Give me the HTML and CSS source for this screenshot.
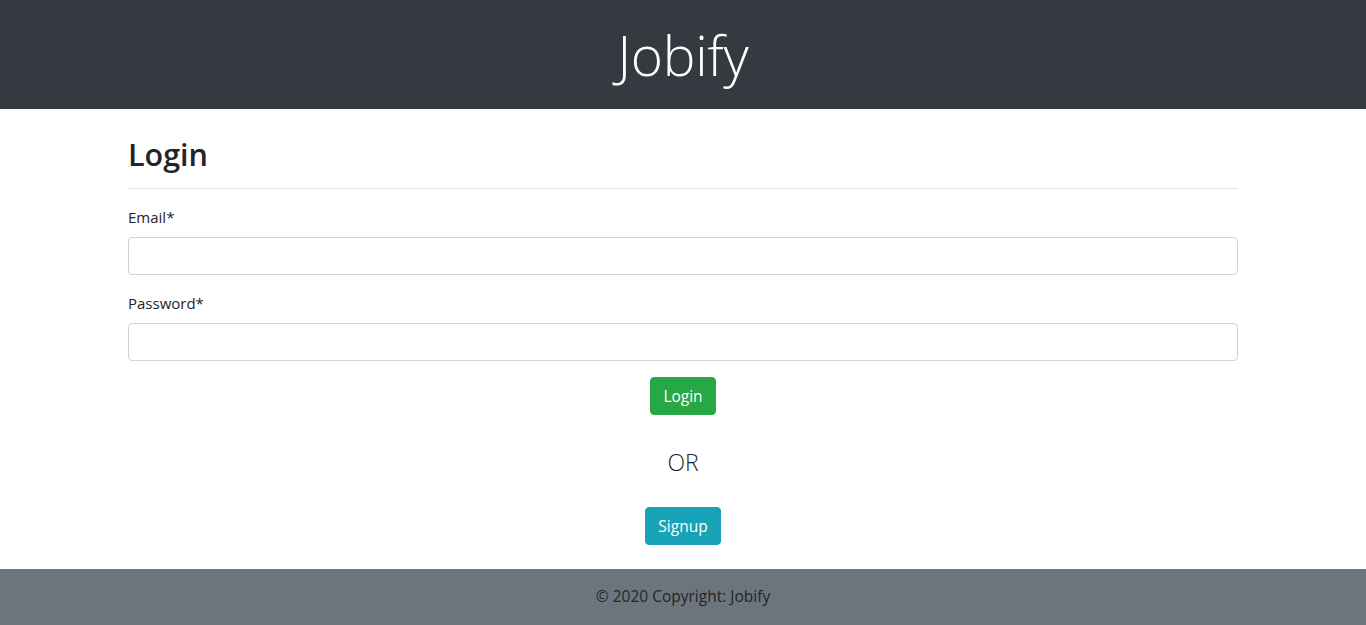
FILE: index.html
```html
<!DOCTYPE html>
<html lang="en">
<head>
<meta charset="utf-8">
<title>Jobify - Login</title>
<link rel="stylesheet" href="styles.css">
</head>
<body>
<header class="site-header">
  <h1 class="brand">Jobify</h1>
</header>
<main class="container">
  <h2 class="page-title">Login</h2>
  <hr class="divider">
  <form class="login-form">
    <div class="form-group">
      <label class="form-label" for="email">Email*</label>
      <input class="form-control" id="email" type="email">
    </div>
    <div class="form-group">
      <label class="form-label" for="password">Password*</label>
      <input class="form-control" id="password" type="password">
    </div>
    <div class="actions">
      <button class="btn btn-success" type="button">Login</button>
      <p class="or-text">OR</p>
      <button class="btn btn-info" type="button">Signup</button>
    </div>
  </form>
</main>
<footer class="site-footer">© 2020 Copyright: Jobify</footer>
</body>
</html>
```
FILE: styles.css
```css
* { box-sizing: border-box; }
html, body { margin: 0; padding: 0; }
body {
  font-family: "Open Sans", "Noto Sans", "Liberation Sans", sans-serif;
  font-size: 16px;
  line-height: 1.5;
  color: #212529;
  background: #fff;
}
.site-header {
  background: #343a40;
  height: 109px;
  display: flex;
  align-items: center;
  justify-content: center;
}
.brand {
  margin: 0;
  font-size: 55px;
  font-weight: 300;
  line-height: 67px;
  color: #fff;
  letter-spacing: -0.3px;
}
.container {
  width: 1110px;
  margin: 0 auto;
  padding: 25px 0 24px;
}
.page-title {
  margin: 0;
  padding-top: 3px;
  font-size: 30.5px;
  font-weight: 600;
  line-height: 35px;
  color: #212529;
}
.divider {
  margin: 16px 0;
  border: 0;
  border-top: 1px solid rgba(0,0,0,0.1);
  height: 0;
}
.login-form { margin: 0; }
.form-group { margin-bottom: 16px; }
.form-label {
  display: block;
  margin-bottom: 8px;
  font-size: 15px;
  line-height: 24px;
}
.form-control {
  display: block;
  width: 100%;
  height: 38px;
  padding: 6px 12px;
  border: 1px solid #ced4da;
  border-radius: 4px;
  background: #fff;
  font: inherit;
}
.actions {
  display: flex;
  flex-direction: column;
  align-items: center;
}
.btn {
  height: 38px;
  padding: 0 12px;
  border: 1px solid transparent;
  border-radius: 4px;
  color: #fff;
  font-family: inherit;
  font-size: 15.5px;
  line-height: 36px;
}
.btn-success { background: #28a745; border-color: #28a745; width: 66px; }
.btn-info { background: #17a2b8; border-color: #17a2b8; width: 76px; }
.or-text {
  margin: 29px 0 27px;
  font-size: 23px;
  font-weight: 300;
  line-height: 36px;
  color: #212529;
}
.site-footer {
  background: #6c757d;
  height: 56px;
  display: flex;
  align-items: center;
  justify-content: center;
  font-size: 15.5px;
  color: #212529;
}
```
